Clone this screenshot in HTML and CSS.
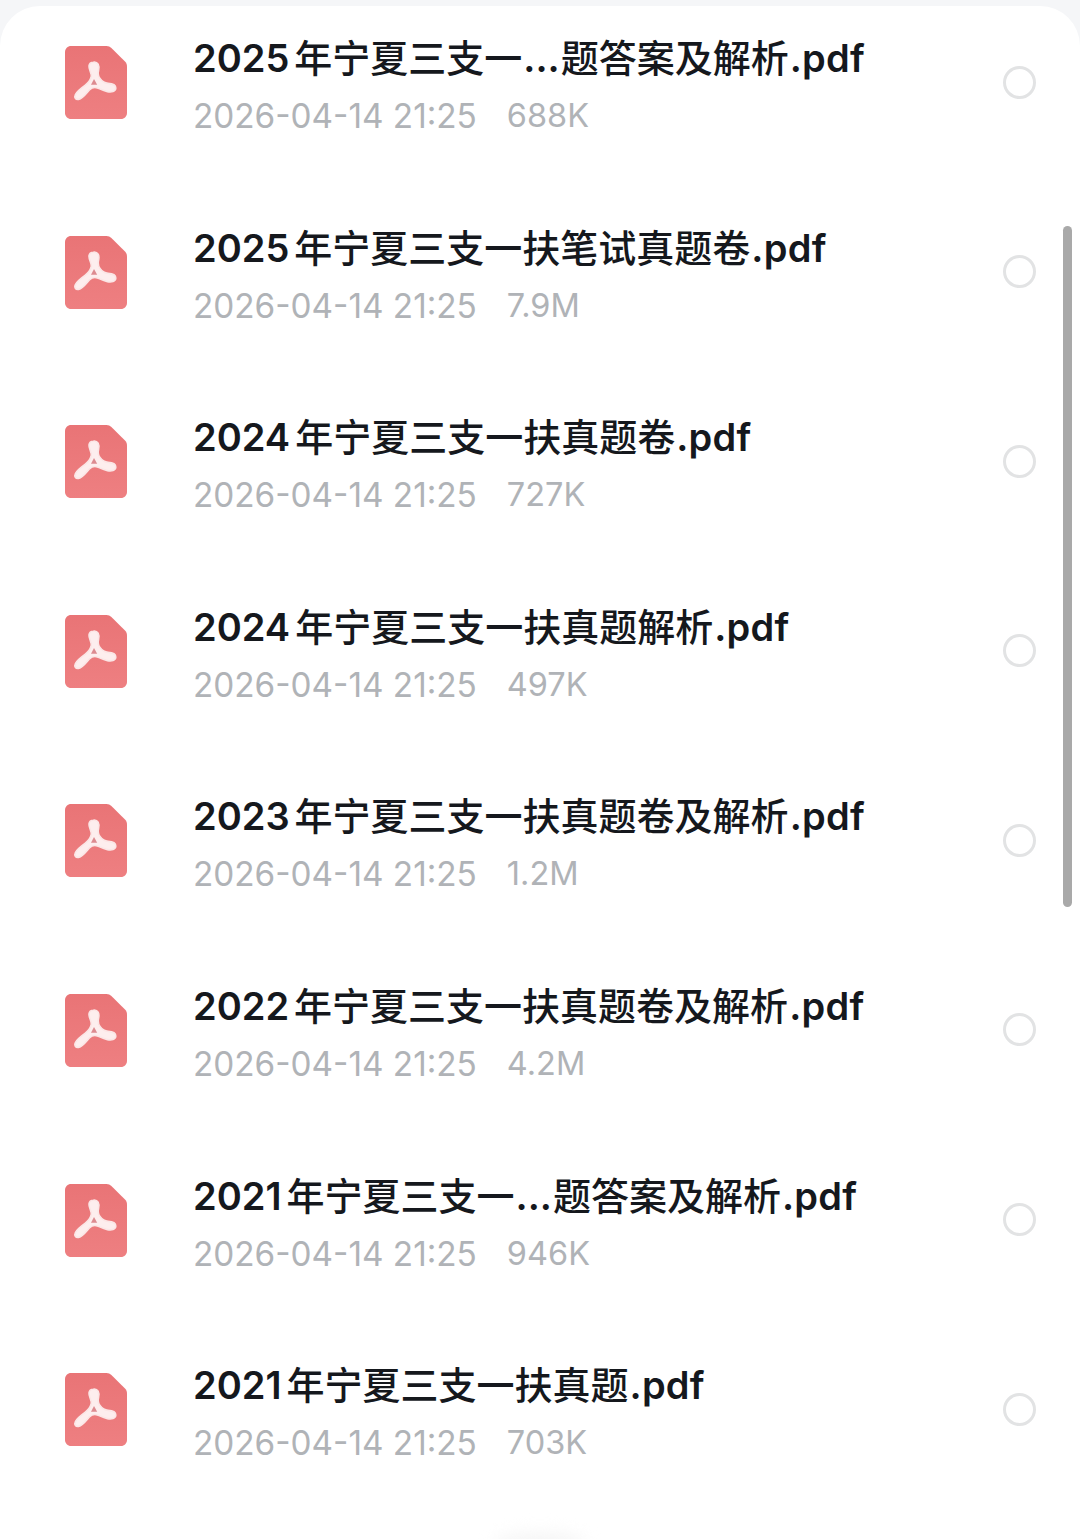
FILE: index.html
```html
<!DOCTYPE html>
<html lang="zh-CN">
<head>
<meta charset="utf-8">
<title>文件列表</title>
<link rel="stylesheet" href="styles.css">
</head>
<body>
<svg class="defs" width="0" height="0" aria-hidden="true">
  <defs>
    <linearGradient id="pdf-fill" x1="0" y1="0" x2="0" y2="1">
      <stop offset="0" stop-color="#e97476"/>
      <stop offset="1" stop-color="#ee7f81"/>
    </linearGradient>
    <symbol id="pdf" viewBox="0 0 62 73">
      <path d="M6 0H41.5C43.5 0 45 .7 46.4 2L60 15.6C61.3 17 62 18.5 62 20.5V67C62 70.3 59.3 73 56 73H6C2.7 73 0 70.3 0 67V6C0 2.7 2.7 0 6 0Z" fill="url(#pdf-fill)"/>
      <path d="M28.5 16C33 15.5 34.6 19.5 33.6 24C32.8 27.6 33 30 35 32.6C37 35.2 39.4 37.2 43 37.4C46.5 37.6 50.8 38.6 50.8 42C50.8 45.6 46.2 46.4 42.5 45.6C38.8 44.8 35.4 43.2 32.5 42C29.5 40.8 26.8 41.6 24.4 44C21.5 47 18 52.4 13.6 53.4C10.6 54 9 51.2 10.4 48.6C12.4 44.8 16.6 41.8 20 39.4C23 37.2 25.4 34 26.2 30.8C27 27.4 23.6 23.6 24 19.8C24.3 17.6 26.2 16.2 28.5 16Z" fill="#fdeeee" stroke="#fbe6e6" stroke-width="1.6"/>
      <path d="M29 33L32.2 38.8H26Z" fill="#dd8b90"/>
    </symbol>
  </defs>
</svg>
<main class="sheet">
  <article class="row">
    <svg class="file-icon"><use href="#pdf"/></svg>
    <div class="info"><h2 class="name"><span class="year">2025</span>年宁夏三支一<span class="dots">...</span>题答案及解析<span class="ext">.pdf</span></h2><p class="meta"><span>2026-04-14 21:25</span><span class="size">688K</span></p></div>
    <span class="radio"></span>
  </article>
  <article class="row">
    <svg class="file-icon"><use href="#pdf"/></svg>
    <div class="info"><h2 class="name"><span class="year">2025</span>年宁夏三支一扶笔试真题卷<span class="ext">.pdf</span></h2><p class="meta"><span>2026-04-14 21:25</span><span class="size">7.9M</span></p></div>
    <span class="radio"></span>
  </article>
  <article class="row">
    <svg class="file-icon"><use href="#pdf"/></svg>
    <div class="info"><h2 class="name"><span class="year">2024</span>年宁夏三支一扶真题卷<span class="ext">.pdf</span></h2><p class="meta"><span>2026-04-14 21:25</span><span class="size">727K</span></p></div>
    <span class="radio"></span>
  </article>
  <article class="row">
    <svg class="file-icon"><use href="#pdf"/></svg>
    <div class="info"><h2 class="name"><span class="year">2024</span>年宁夏三支一扶真题解析<span class="ext">.pdf</span></h2><p class="meta"><span>2026-04-14 21:25</span><span class="size">497K</span></p></div>
    <span class="radio"></span>
  </article>
  <article class="row">
    <svg class="file-icon"><use href="#pdf"/></svg>
    <div class="info"><h2 class="name"><span class="year">2023</span>年宁夏三支一扶真题卷及解析<span class="ext">.pdf</span></h2><p class="meta"><span>2026-04-14 21:25</span><span class="size">1.2M</span></p></div>
    <span class="radio"></span>
  </article>
  <article class="row">
    <svg class="file-icon"><use href="#pdf"/></svg>
    <div class="info"><h2 class="name"><span class="year">2022</span>年宁夏三支一扶真题卷及解析<span class="ext">.pdf</span></h2><p class="meta"><span>2026-04-14 21:25</span><span class="size">4.2M</span></p></div>
    <span class="radio"></span>
  </article>
  <article class="row">
    <svg class="file-icon"><use href="#pdf"/></svg>
    <div class="info"><h2 class="name"><span class="year">2021</span>年宁夏三支一<span class="dots">...</span>题答案及解析<span class="ext">.pdf</span></h2><p class="meta"><span>2026-04-14 21:25</span><span class="size">946K</span></p></div>
    <span class="radio"></span>
  </article>
  <article class="row">
    <svg class="file-icon"><use href="#pdf"/></svg>
    <div class="info"><h2 class="name"><span class="year">2021</span>年宁夏三支一扶真题<span class="ext">.pdf</span></h2><p class="meta"><span>2026-04-14 21:25</span><span class="size">703K</span></p></div>
    <span class="radio"></span>
  </article>
  <div class="scrollbar"></div>
  <div class="home-glow"></div>
</main>
</body>
</html>
```
FILE: styles.css
```css
html, body {
  margin: 0;
  padding: 0;
  height: 100%;
  overflow: hidden;
  background: #f5f6f8;
}
.defs { position: absolute; }
.sheet {
  position: relative;
  box-sizing: border-box;
  height: 1539px;
  margin-top: 6px;
  padding-top: 40px;
  background: #fff;
  border-radius: 40px 40px 0 0;
  overflow: hidden;
  font-family: Inter, "Noto Sans CJK SC", sans-serif;
}
.row {
  display: flex;
  align-items: flex-start;
  height: 189.6px;
  padding-left: 65px;
}
.file-icon {
  flex: none;
  width: 62px;
  height: 73px;
  margin-right: 66px;
}
.info {
  width: 810px;
  margin-top: -11px;
}
.name {
  margin: 0;
  font-size: 38px;
  line-height: 46px;
  font-weight: 500;
  color: #15181d;
  white-space: nowrap;
}
.year, .dots, .ext { font-weight: 600; }
.year { margin-right: 5px; }
.dots { margin: 0 1px; }
.ext {
  margin-left: 1px;
  letter-spacing: 0.25px;
}
.meta {
  display: flex;
  gap: 30px;
  margin: 15px 0 0;
  font-size: 33.3px;
  line-height: 40px;
  font-weight: 400;
  color: #b0b3b7;
  white-space: nowrap;
}
.size { font-size: 32.5px; }
.radio {
  flex: none;
  box-sizing: border-box;
  width: 33px;
  height: 33px;
  margin: 19.5px 0 0 0;
  border: 3.5px solid #e2e3e4;
  border-radius: 50%;
}
.scrollbar {
  position: absolute;
  left: 1063px;
  top: 220px;
  width: 9px;
  height: 681px;
  border-radius: 5px;
  background: #a9a9a9;
}
.home-glow {
  position: absolute;
  left: 495px;
  top: 1526px;
  width: 90px;
  height: 24px;
  border-radius: 50%;
  background: #f6f6f6;
  filter: blur(8px);
}
```
